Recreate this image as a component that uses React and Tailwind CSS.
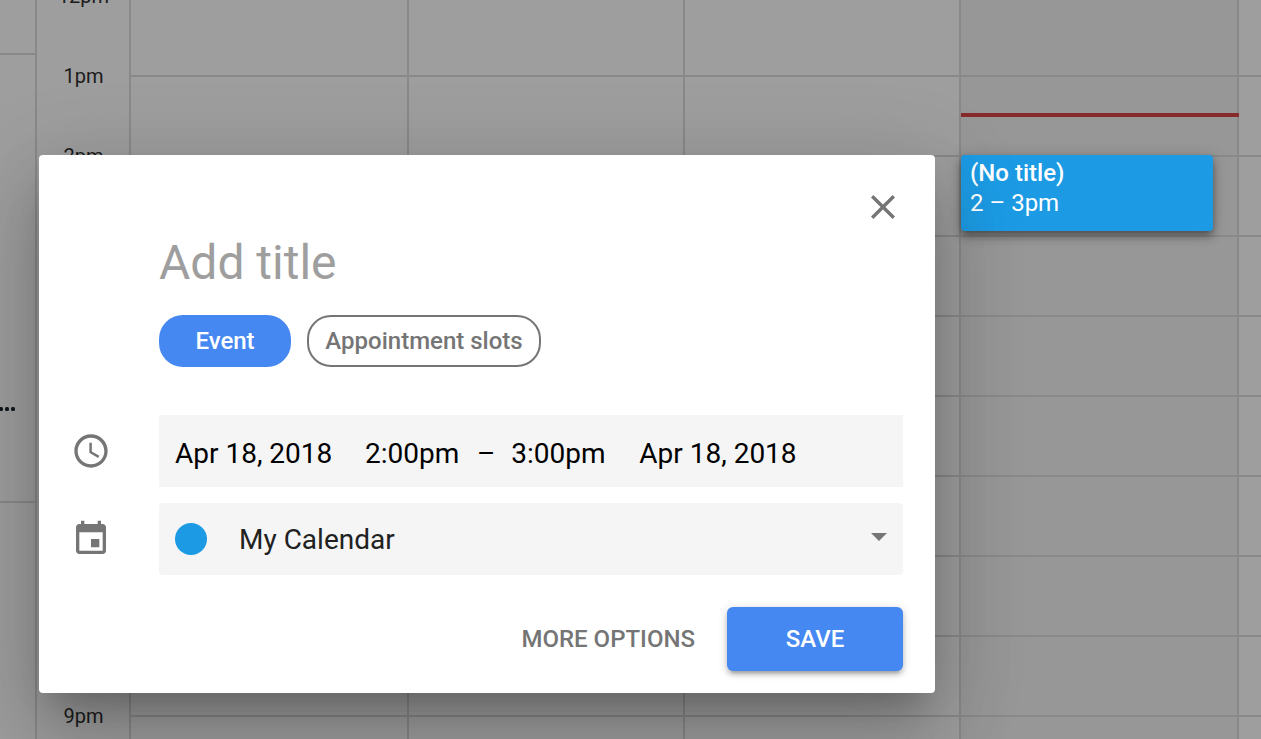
import React from 'react';

const rows = Array.from({ length: 9 }, (_, i) => i);
const hours = ['12pm', '1pm', '2pm', '3pm', '4pm', '5pm', '6pm', '7pm', '8pm', '9pm'];

function DayColumn({ width, today, children }) {
  return (
    <div className={`relative shrink-0 border-l-2 border-[#898989] ${width} ${today ? 'bg-[#979797]' : ''}`}>
      <div className="h-[77px] border-b-2 border-[#898989]" />
      {rows.map((r) => (
        <div key={r} className="h-20 border-b-2 border-[#898989]" />
      ))}
      {children}
    </div>
  );
}

function CalendarBackdrop() {
  return (
    <div className="flex h-full w-[1400px]">
      <div className="w-[37px] shrink-0 border-r-2 border-[#898989]">
        <div className="h-[55px] border-b-2 border-[#898989]" />
        <div className="flex h-[448px] items-end overflow-hidden border-b-2 border-[#898989] pb-[90px]">
          <div className="flex gap-0.5 text-[#10161f]">
            <span className="-ml-px h-1 w-1 rounded-[1.5px] bg-current" />
            <span className="h-1 w-1 rounded-[1.5px] bg-current" />
            <span className="h-1 w-1 rounded-[1.5px] bg-current" />
          </div>
        </div>
      </div>
      <div className="-mt-[45px] w-[92px] shrink-0">
        {hours.map((h) => (
          <div key={h} className="-mb-px flex h-[81px] items-center justify-center pl-px text-[20px] leading-none text-[#1c1c1c]">
            {h}
          </div>
        ))}
      </div>
      <DayColumn width="w-[278px]" />
      <DayColumn width="w-[276px]" />
      <DayColumn width="w-[276px]" />
      <DayColumn width="w-[278px]" today>
        <div className="absolute top-[113px] right-[-2px] left-0 z-10 h-1 bg-[#852b2a]" />
        <div className="absolute top-[155px] left-0 h-[76px] w-[252px] rounded bg-[#1c9be4] px-[9px] pt-[3px] text-[24px] leading-[30px] text-white shadow-[0_6px_10px_rgba(0,0,0,0.2),0_2px_16px_rgba(0,0,0,0.18),0_4px_6px_-1px_rgba(0,0,0,0.25)]">
          <div className="font-medium">(No title)</div>
          <div>2 – 3pm</div>
        </div>
      </DayColumn>
      <DayColumn width="w-[278px]" />
    </div>
  );
}

function ClockIcon() {
  return (
    <svg className="size-10" viewBox="0 0 24 24" fill="#757575">
      <path d="M11.99 2C6.47 2 2 6.48 2 12s4.47 10 9.99 10C17.52 22 22 17.52 22 12S17.52 2 11.99 2zM12 20c-4.42 0-8-3.58-8-8s3.58-8 8-8 8 3.580 8 8-3.580 8-8 8z" />
      <path d="M12.500 7H11v6l5.250 3.150.750-1.230-4.500-2.670z" />
    </svg>
  );
}

function CalendarIcon() {
  return (
    <svg className="size-10" viewBox="0 0 24 24" fill="#757575">
      <path d="M17 12h-5v5h5v-5zM16 1v2H8V1H6v2H5c-1.110 0-1.990.9-1.990 2L3 19c0 1.100.890 2 2 2h14c1.100 0 2-.9 2-2V5c0-1.100-.9-2-2-2h-1V1h-2zm3 18H5V8h14v11z" />
    </svg>
  );
}

function EventDialog() {
  return (
    <div className="absolute top-[155px] left-[39px] flex h-[538px] w-[896px] flex-col rounded bg-white px-8 shadow-[0_48px_76px_6px_rgba(0,0,0,0.14),0_18px_88px_12px_rgba(0,0,0,0.12),0_22px_30px_-14px_rgba(0,0,0,0.2)]">
      <div className="flex h-[72px] items-end justify-end">
        <svg className="size-10" viewBox="0 0 40 40" fill="none" stroke="#757575" strokeWidth="3.4">
          <path d="M9.200 9.200 30.800 30.800M30.800 9.200 9.200 30.800" />
        </svg>
      </div>
      <div className="mt-2 ml-[88px] h-14 text-[48px] leading-[56px] text-[#9e9e9e]">Add title</div>
      <div className="mt-6 ml-[88px] flex gap-4 text-[24px] font-medium">
        <div className="flex h-[52px] w-[132px] items-center justify-center rounded-[24px] bg-[#4688f1] text-white">Event</div>
        <div className="flex h-[52px] w-[234px] items-center justify-center rounded-[24px] border-2 border-[#757575] text-[#757575]">
          Appointment slots
        </div>
      </div>
      <div className="mt-12 flex items-center">
        <div className="w-[88px]"><ClockIcon /></div>
        <div className="flex h-[72px] w-[744px] items-center bg-[#f5f5f5] pt-1.5 pl-4 text-[28px] text-black">
          <span className="w-[190px]">Apr 18, 2018</span>
          <span className="w-[112px]">2:00pm</span>
          <span className="w-[34.3px]">–</span>
          <span className="w-[128px]">3:00pm</span>
          <span>Apr 18, 2018</span>
        </div>
      </div>
      <div className="mt-4 flex items-center">
        <div className="w-[88px]"><CalendarIcon /></div>
        <div className="flex h-[72px] w-[744px] items-center rounded bg-[#f5f5f5] px-4 text-[28px] text-[#212121]">
          <span className="size-8 rounded-full bg-[#1c9be4]" />
          <span className="ml-8 flex-1 pt-0.5">My Calendar</span>
          <svg className="mb-1 h-2 w-4" viewBox="0 0 16 8" fill="#757575">
            <path d="M0 0h16L8 8z" />
          </svg>
        </div>
      </div>
      <div className="mt-8 flex items-center justify-end gap-8 text-[24px] font-medium">
        <span className="text-[#757575]">MORE OPTIONS</span>
        <div className="flex h-16 w-44 items-center justify-center rounded-[6px] bg-[#4688f1] text-white shadow-[0_4px_4px_rgba(0,0,0,0.14),0_6px_2px_-4px_rgba(0,0,0,0.12),0_2px_10px_rgba(0,0,0,0.2)]">SAVE</div>
      </div>
    </div>
  );
}

export default function App() {
  return (
    <div className="relative h-[739px] w-[1261px] overflow-hidden bg-[#9e9e9e] font-['Roboto',sans-serif]">
      <CalendarBackdrop />
      <EventDialog />
    </div>
  );
}
